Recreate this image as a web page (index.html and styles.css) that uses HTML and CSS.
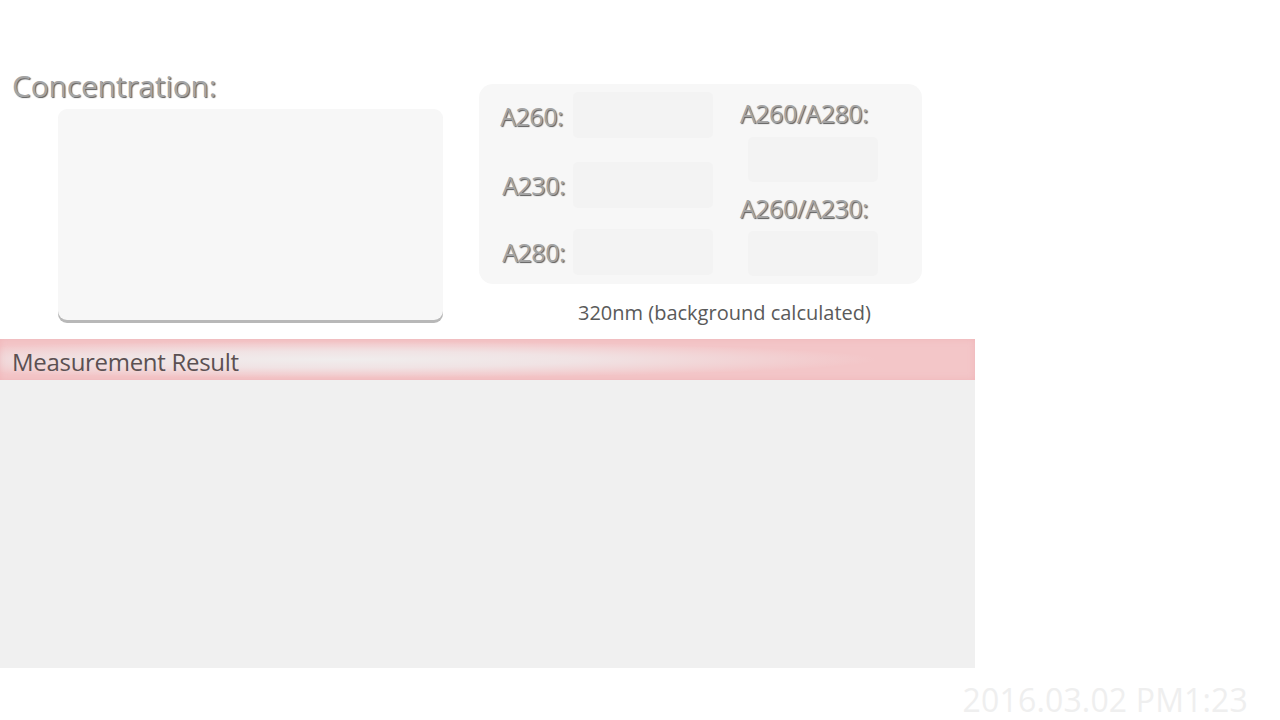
FILE: index.html
```html
<!DOCTYPE html>
<html>
<head>
<meta charset="utf-8">
<link rel="stylesheet" href="styles.css">
</head>
<body>
<div class="page">
  <div class="top">
    <div class="conc">
      <div class="conc-title emboss">Concentration:</div>
      <div class="conc-box"></div>
    </div>
    <div class="abs">
      <div class="panel">
        <div class="grp-left">
          <div class="row r1"><span class="lbl emboss">A260:</span><div class="field"></div></div>
          <div class="row r2"><span class="lbl emboss">A230:</span><div class="field"></div></div>
          <div class="row r3"><span class="lbl emboss">A280:</span><div class="field"></div></div>
        </div>
        <div class="grp-right">
          <span class="rlbl emboss l1">A260/A280:</span>
          <div class="rfield f1"></div>
          <span class="rlbl emboss l2">A260/A230:</span>
          <div class="rfield f2"></div>
        </div>
      </div>
      <div class="caption">320nm (background calculated)</div>
    </div>
  </div>
  <div class="result">
    <div class="result-head">Measurement Result</div>
    <div class="result-body"></div>
  </div>
  <div class="footer"><span class="date">2016.03.02 PM1:23</span></div>
</div>
</body>
</html>
```
FILE: styles.css
```css
html, body {
  margin: 0;
  padding: 0;
  background: #ffffff;
  font-family: "Open Sans", "Noto Sans", sans-serif;
}
.page {
  width: 1280px;
  height: 720px;
  overflow: hidden;
}
.emboss {
  color: #a4a4a4;
  text-shadow: 1px 1px 1px #5c5c5c;
}
.top {
  display: flex;
  height: 339px;
}
.conc {
  width: 479px;
  padding-top: 66px;
  box-sizing: border-box;
}
.conc-title {
  font-size: 30px;
  line-height: 40px;
  height: 40px;
  margin-left: 12px;
  letter-spacing: -0.2px;
}
.conc-box {
  margin-top: 3px;
  margin-left: 58px;
  width: 385px;
  height: 211px;
  background: #f7f7f7;
  border-radius: 9px;
  box-shadow: 0 3px 0 #b8b8b8;
}
.abs {
  padding-top: 84px;
}
.panel {
  width: 443px;
  height: 200px;
  background: #f7f7f7;
  border-radius: 14px;
  display: flex;
  box-sizing: border-box;
  padding-top: 8px;
}
.grp-left {
  width: 261px;
  display: flex;
  flex-direction: column;
}
.row {
  display: flex;
  align-items: center;
}
.lbl {
  width: 94px;
  text-align: right;
  font-size: 25px;
  letter-spacing: -0.5px;
  padding-right: 8px;
  box-sizing: border-box;
  white-space: nowrap;
}
.r1 .lbl { padding-right: 10px; position: relative; top: 1px; }
.r2 { margin-top: 24px; }
.r3 { margin-top: 21px; }
.field {
  width: 140px;
  height: 46px;
  background: #f3f3f3;
  border-radius: 5px;
}
.grp-right {
  display: flex;
  flex-direction: column;
}
.rlbl {
  font-size: 25px;
  letter-spacing: -0.5px;
  line-height: 30px;
  height: 30px;
  white-space: nowrap;
}
.l1 { margin-top: 6px; }
.rfield {
  width: 130px;
  height: 45px;
  margin-left: 8px;
  background: #f3f3f3;
  border-radius: 5px;
}
.f1 { margin-top: 9px; }
.l2 { margin-top: 11px; }
.f2 { margin-top: 8px; }
.caption {
  margin-top: 15px;
  padding-left: 99px;
  font-size: 20px;
  line-height: 28px;
  color: #5a5a5a;
}
.result {
  width: 975px;
}
.result-head {
  height: 41px;
  box-sizing: border-box;
  padding-left: 12px;
  font-size: 24px;
  line-height: 45px;
  color: #5b5052;
  letter-spacing: -0.3px;
  background:
    radial-gradient(ellipse 55% 45% at 35% 50%, rgba(240,237,237,1) 0%, rgba(240,230,231,0.9) 45%, rgba(243,198,200,0) 100%),
    #f3c6c8;
  box-shadow: inset 0 0 6px rgba(238,170,175,0.6);
}
.result-body {
  height: 288px;
  background: #f0f0f0;
}
.footer {
  display: flex;
  justify-content: flex-end;
  padding-right: 32px;
  padding-top: 14px;
}
.date {
  font-size: 32px;
  line-height: 36px;
  color: #efefef;
  letter-spacing: 0.15px;
}
```
